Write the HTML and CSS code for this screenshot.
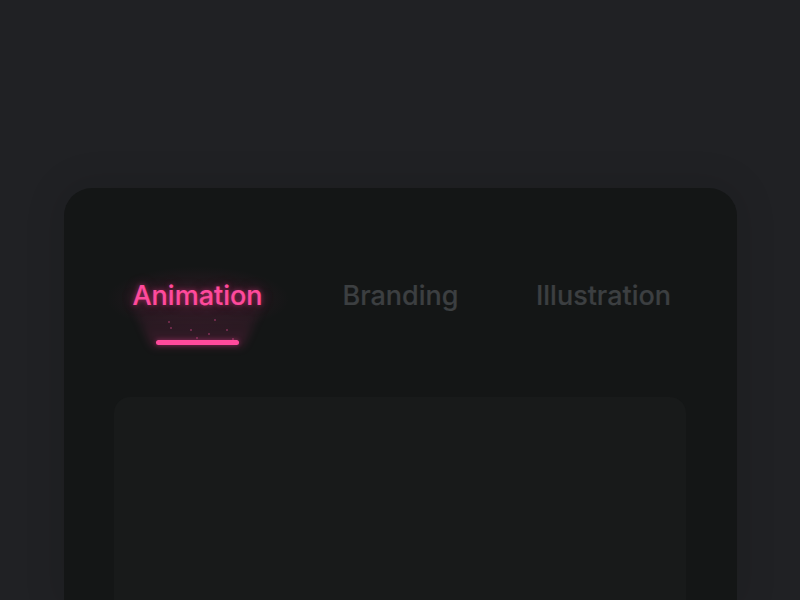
FILE: index.html
```html
<!DOCTYPE html>
<html lang="en">
<head>
<meta charset="utf-8">
<title>Tabs</title>
<link rel="stylesheet" href="styles.css">
</head>
<body>
<div class="card">
  <nav class="tabs">
    <div class="tab active">
      <div class="halo"></div>
      <div class="beam"></div>
      <span class="label">Animation</span>
      <div class="dots">
        <i class="dot d1"></i><i class="dot d2"></i><i class="dot d3"></i><i class="dot d4"></i><i class="dot d5"></i><i class="dot d6"></i><i class="dot d7"></i><i class="dot d8"></i>
      </div>
      <span class="bar"></span>
    </div>
    <div class="tab"><span class="label">Branding</span></div>
    <div class="tab"><span class="label">Illustration</span></div>
  </nav>
  <div class="panel"></div>
</div>
</body>
</html>
```

FILE: styles.css
```css
html, body {
  margin: 0;
  height: 100%;
  overflow: hidden;
}
body {
  background: #202124;
  font-family: Inter, "Noto Sans", sans-serif;
}
.card {
  margin: 188px 0 0 64px;
  width: 673px;
  height: 412px;
  background: #141616;
  border-radius: 28px 28px 0 0;
  padding: 93px 0 0;
  box-sizing: border-box;
  box-shadow: 0 0 36px 6px rgba(0, 0, 0, 0.1);
}
.tabs {
  display: grid;
  grid-template-columns: repeat(3, 203px);
  justify-content: center;
}
.tab {
  position: relative;
  display: flex;
  flex-direction: column;
  align-items: center;
}
.label {
  position: relative;
  font-size: 27px;
  line-height: 30px;
  font-weight: 500;
  color: #3c3f41;
  -webkit-text-stroke: 0.2px currentColor;
}
.active .label {
  color: #ff4a9c;
  text-shadow: 0 0 5px rgba(255, 60, 150, 0.5), 0 0 14px rgba(255, 60, 150, 0.28);
}
.halo {
  position: absolute;
  left: 50%;
  top: -14px;
  width: 180px;
  height: 64px;
  transform: translateX(-50%);
  background: radial-gradient(ellipse at center, rgba(255, 60, 150, 0.09) 0%, rgba(255, 60, 150, 0.035) 50%, rgba(255, 60, 150, 0) 72%);
}
.beam {
  position: absolute;
  left: 50%;
  top: 8px;
  width: 150px;
  height: 58px;
  transform: translateX(-50%);
  filter: blur(4px);
}
.beam::before {
  content: "";
  position: absolute;
  inset: 0;
  background: linear-gradient(to bottom, rgba(255, 60, 150, 0) 0%, rgba(255, 60, 150, 0.06) 45%, rgba(255, 60, 150, 0.16) 100%);
  clip-path: polygon(0 0, 100% 0, 80% 100%, 20% 100%);
}
.dots {
  position: absolute;
  left: 50%;
  top: 34px;
  width: 100px;
  height: 30px;
  transform: translateX(-50%);
}
.dot {
  position: absolute;
  width: 2px;
  height: 2px;
  border-radius: 50%;
  background: rgba(255, 80, 160, 0.4);
}
.d1 { left: 22px; top: 12px; }
.d2 { left: 20px; top: 6px; }
.d3 { left: 42px; top: 14px; }
.d4 { left: 48px; top: 22px; }
.d5 { left: 60px; top: 18px; }
.d6 { left: 66px; top: 4px; }
.d7 { left: 78px; top: 14px; }
.d8 { left: 84px; top: 23px; }
.bar {
  position: relative;
  margin-top: 29px;
  width: 83px;
  height: 5px;
  border-radius: 3px;
  background: #ff4a9c;
  box-shadow: 0 0 5px rgba(255, 60, 150, 0.45);
}
.panel {
  margin: 52px 51px 0 50px;
  height: 260px;
  background: #181a1a;
  border-radius: 16px 16px 0 0;
}
```
